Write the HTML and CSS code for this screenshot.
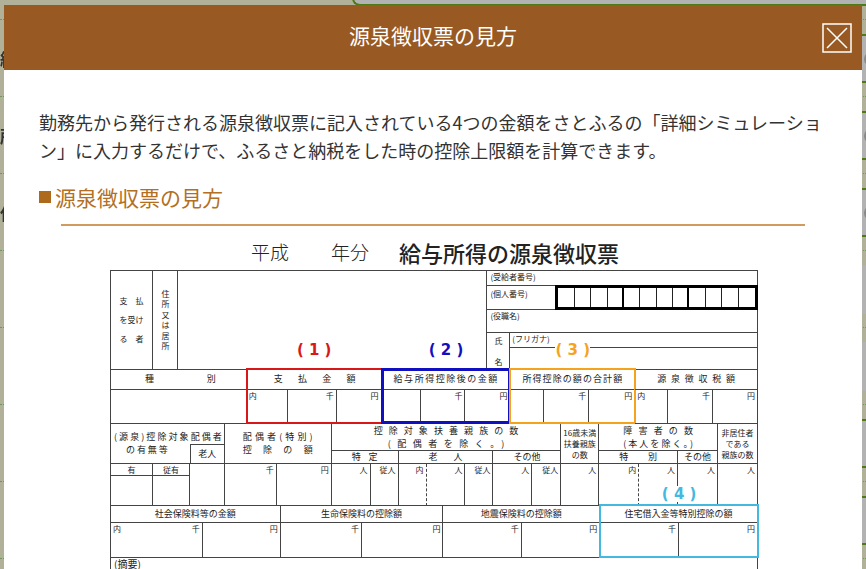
FILE: index.html
```html
<!DOCTYPE html>
<html lang="ja">
<head>
    <meta charset="UTF-8">
    <meta name="viewport" content="width=device-width, initial-scale=1.0">
    <title>源泉徴収票の見方</title>
    <link rel="stylesheet" href="styles.css">
</head>
<body>
    <!-- Page behind the dialog -->
    <div class="page" aria-hidden="true">
        <div class="page-row"><div class="page-field"></div></div>
        <div class="page-row"><span>給</span><div class="page-field select"></div></div>
        <div class="page-row"><span>所</span><div class="page-field select"></div></div>
        <div class="page-row"><span>住</span><div class="page-field select"></div></div>
        <div class="page-row"><div class="page-field plain"></div></div>
        <div class="page-row"><div class="page-field plain"></div></div>
        <div class="page-row"><div class="page-field"></div></div>
        <div class="page-row"><div class="page-field"></div></div>
    </div>

    <div class="overlay">
        <div class="modal" role="dialog" aria-labelledby="modalTitle">
            <header class="modal-header">
                <h1 id="modalTitle">源泉徴収票の見方</h1>
                <button type="button" class="close" aria-label="閉じる">
                    <svg width="30" height="30" viewBox="0 0 30 30" fill="none" stroke="#fff">
                        <rect x="1" y="1" width="28" height="28" stroke-width="1.5"/>
                        <path d="M5 5L25 25M25 5L5 25" stroke-width="1.5"/>
                    </svg>
                </button>
            </header>

            <div class="modal-body">
                <p class="lead">勤務先から発行される源泉徴収票に記入されている4つの金額をさとふるの「詳細シミュレーション」に入力するだけで、ふるさと納税をした時の控除上限額を計算できます。</p>
                <h2>源泉徴収票の見方</h2>

                <div class="slip">
                    <div class="slip-title">
                        <span>平成</span>
                        <span>年分</span>
                        <strong>給与所得の源泉徴収票</strong>
                    </div>

                    <div class="sheet">
                        <!-- Payee -->
                        <div class="grid payee">
                            <div class="cell payee-label"><span>支　払</span><span>を受け</span><span>る　者</span></div>
                            <div class="cell address spread">住所又は居所</div>
                            <div class="cell"></div>
                            <div class="person">
                                <div class="cell">(受給者番号)</div>
                                <div class="cell my-number">
                                    <span>(個人番号)</span>
                                    <div class="digits">
                                        <i></i><i></i><i></i><i></i><i></i><i></i><i></i><i></i><i></i><i></i><i></i><i></i>
                                    </div>
                                </div>
                                <div class="cell">(役職名)</div>
                                <div class="name">
                                    <div class="cell name-label"><span>氏</span><span>名</span></div>
                                    <div>
                                        <div class="cell kana">(フリガナ)</div>
                                        <div class="cell"></div>
                                    </div>
                                </div>
                            </div>
                        </div>

                        <!-- Amounts -->
                        <div class="grid amounts">
                            <div class="group">
                                <div class="cell label spread wide">種別</div>
                                <div class="cell"></div>
                            </div>
                            <div class="group mark red">
                                <b class="tag">( 1 )</b>
                                <div class="cell label spread pay">支払金額</div>
                                <div class="grid split-pay">
                                    <div class="cell unit left">内</div>
                                    <div class="cell unit">千</div>
                                    <div class="cell unit">円</div>
                                </div>
                            </div>
                            <div class="group mark blue">
                                <b class="tag">( 2 )</b>
                                <div class="cell label spread">給与所得控除後の金額</div>
                                <div class="grid split-after">
                                    <div class="cell"></div>
                                    <div class="cell unit">千</div>
                                    <div class="cell unit">円</div>
                                </div>
                            </div>
                            <div class="group mark orange">
                                <b class="tag">( 3 )</b>
                                <div class="cell label spread">所得控除の額の合計額</div>
                                <div class="grid split-total">
                                    <div class="cell"></div>
                                    <div class="cell unit">千</div>
                                    <div class="cell unit">円</div>
                                </div>
                            </div>
                            <div class="group">
                                <div class="cell label spread tax">源泉徴収税額</div>
                                <div class="grid split-tax">
                                    <div class="cell unit left">内</div>
                                    <div class="cell unit">千</div>
                                    <div class="cell unit">円</div>
                                </div>
                            </div>
                        </div>

                        <!-- Dependants -->
                        <div class="grid family">
                            <div class="spouse">
                                <div class="cell spouse-label"><span class="spread">(源泉)控除対象配偶者</span><span class="spread second">の有無等</span></div>
                                <div class="cell old">老人</div>
                            </div>
                            <div class="cell special"><span class="spread">配偶者(特別)</span><span class="spread">控除の額</span></div>
                            <div class="group">
                                <div class="cell count wide"><span class="spread">控除対象扶養親族の数</span><span class="spread">(配偶者を除く。)</span></div>
                                <div class="grid split-count">
                                    <div class="cell label spread">特定</div>
                                    <div class="cell label spread">老人</div>
                                    <div class="cell label spread">その他</div>
                                </div>
                            </div>
                            <div class="cell note"><span>16歳未満</span><span>扶養親族</span><span>の数</span></div>
                            <div class="group">
                                <div class="cell count"><span class="spread">障害者の数</span><span class="spread">(本人を除く。)</span></div>
                                <div class="grid split-care">
                                    <div class="cell label spread">特別</div>
                                    <div class="cell label">その他</div>
                                </div>
                            </div>
                            <div class="cell note"><span>非居住者</span><span>である</span><span>親族の数</span></div>
                        </div>

                        <div class="grid people">
                            <div class="group yes"><div class="cell label">有</div><div class="cell"></div></div>
                            <div class="group yes"><div class="cell label">従有</div><div class="cell"></div></div>
                            <div class="cell"></div>
                            <div class="cell unit">千</div>
                            <div class="cell unit">円</div>
                            <div class="cell unit">人</div>
                            <div class="cell unit">従人</div>
                            <div class="cell unit dashed">内</div>
                            <div class="cell unit">人</div>
                            <div class="cell unit">従人</div>
                            <div class="cell unit">人</div>
                            <div class="cell unit">従人</div>
                            <div class="cell unit">人</div>
                            <div class="cell unit dashed">内</div>
                            <div class="cell unit">人</div>
                            <div class="cell unit">人</div>
                            <div class="cell unit">人</div>
                        </div>

                        <!-- Insurance and housing loan -->
                        <div class="grid insurance">
                            <div class="group">
                                <div class="cell label">社会保険料等の金額</div>
                                <div class="grid split-social">
                                    <div class="cell unit both"><span>内</span><span>千</span></div>
                                    <div class="cell unit">円</div>
                                </div>
                            </div>
                            <div class="group">
                                <div class="cell label">生命保険料の控除額</div>
                                <div class="grid halves">
                                    <div class="cell unit">千</div>
                                    <div class="cell unit">円</div>
                                </div>
                            </div>
                            <div class="group">
                                <div class="cell label">地震保険料の控除額</div>
                                <div class="grid halves">
                                    <div class="cell unit">千</div>
                                    <div class="cell unit">円</div>
                                </div>
                            </div>
                            <div class="group mark cyan">
                                <b class="tag">( 4 )</b>
                                <div class="cell label">住宅借入金等特別控除の額</div>
                                <div class="grid halves">
                                    <div class="cell unit">千</div>
                                    <div class="cell unit">円</div>
                                </div>
                            </div>
                        </div>

                        <div class="cell remarks">(摘要)</div>
                    </div>
                </div>
            </div>
        </div>
    </div>
</body>
</html>
```

FILE: styles.css
```css
* {
    box-sizing: border-box;
}

body {
    margin: 0;
    background-color: #b1b199;
    color: #333;
    font-family: "Noto Sans CJK JP", sans-serif;
}

h1,
h2,
p {
    margin: 0;
    font-weight: normal;
}

/* Page behind the dialog */
.page {
    position: fixed;
    inset: 0;
    overflow: hidden;
}

.page-row {
    display: grid;
    grid-template-columns: 352px 1fr;
    align-items: center;
    height: 77px;
    padding: 14px 0;
    border-bottom: 1px dotted #6d9a55;
    font-size: 17px;
    font-weight: bold;
}

.page-row:first-child {
    margin-top: -57px;
}

.page-field {
    grid-column: 2;
    height: 49px;
    border: 2px solid #4d7a16;
    border-right: none;
    border-radius: 8px 0 0 8px;
    background-color: #b2b2b2;
}

.page-field.plain {
    border-color: #b2b2b2;
}

.page-field.select::after {
    content: "";
    display: block;
    width: 14px;
    height: 14px;
    margin: 16px -12px 0 auto;
    border-radius: 50%;
    background-color: #888;
}

/* Dialog */
.overlay {
    position: fixed;
    inset: 0;
    padding: 5px 4px 0;
    overflow: hidden;
}

.modal {
    background-color: #fff;
}

.modal-header {
    display: grid;
    grid-template-columns: 1fr auto 1fr;
    align-items: center;
    height: 65px;
    padding: 0 10px;
    background-color: #995923;
    color: #fff;
}

.modal-header h1 {
    grid-column: 2;
    padding-bottom: 6px;
    font-size: 21px;
    line-height: 30px;
}

.close {
    justify-self: end;
    width: 30px;
    height: 30px;
    padding: 0;
    border: none;
    background: none;
    cursor: pointer;
}

.close svg {
    display: block;
}

.modal-body {
    padding: 38px 35px 0;
}

.lead {
    font-size: 18px;
    line-height: 28px;
}

h2 {
    display: flex;
    align-items: center;
    gap: 4px;
    margin-top: 17px;
    color: #b36f22;
    font-size: 21px;
    line-height: 32px;
}

h2::before {
    content: "";
    width: 12px;
    height: 12px;
    background-color: #ad6a1c;
}

/* Tax slip */
.slip {
    margin: 11px 22px 0;
    border-top: 2px solid #d19a5f;
    color: #222;
    font-size: 9px;
    line-height: 12px;
}

.slip-title {
    display: flex;
    gap: 42px;
    margin-left: 190px;
    padding: 10px 0 2px;
    font-size: 19px;
    font-weight: 300;
    line-height: 32px;
    white-space: nowrap;
}

.slip-title strong {
    margin-left: -12px;
    font-size: 22px;
    font-weight: 500;
}

.sheet {
    margin: 0 47px 0 49px;
    border: solid #444;
    border-width: 1px 0 0 1px;
}

.grid {
    display: grid;
}

.grid > *,
.name > * {
    min-width: 0;
}

.cell {
    border: solid #444;
    border-width: 0 1px 1px 0;
    white-space: nowrap;
}

.group {
    position: relative;
    display: grid;
    grid-template-rows: auto 1fr;
}

.label {
    text-align: center;
}

.spread {
    text-align: justify;
    text-align-last: justify;
}

.unit {
    padding-right: 2px;
    font-size: 8px;
    line-height: 12px;
    text-align: right;
}

.unit.left {
    padding-left: 2px;
    text-align: left;
}

.unit.both {
    display: flex;
    justify-content: space-between;
    padding-left: 2px;
}

.unit.dashed {
    border-right-style: dashed;
}

/* Payee */
.payee {
    grid-template-columns: 42fr 25fr 310fr 271fr;
    height: 99px;
}

.payee-label {
    display: flex;
    flex-direction: column;
    align-items: center;
    justify-content: center;
    gap: 7px;
    font-size: 8px;
}

.address {
    padding: 19px 0;
    writing-mode: vertical-rl;
    font-size: 8px;
    line-height: 24px;
}

.person {
    display: grid;
    grid-template-rows: 15fr 24fr 23fr 37fr;
    font-size: 8px;
    line-height: 11px;
}

.person > .cell {
    padding-left: 3px;
}

.my-number {
    display: flex;
    justify-content: space-between;
}

.my-number span {
    padding-top: 2px;
}

.digits {
    display: grid;
    grid-template-columns: repeat(12, 1fr);
    width: 76%;
    border: 3px solid #000;
    margin: -1px -1px -1px 0;
}

.digits i {
    border-right: 1px solid #222;
}

.digits i:nth-child(4n) {
    border-right: 2px solid #000;
}

.digits i:last-child {
    border-right: none;
}

.name {
    display: grid;
    grid-template-columns: 23fr 248fr;
}

.name > div:last-child {
    display: grid;
    grid-template-rows: 15fr 22fr;
}

.name-label {
    display: flex;
    flex-direction: column;
    align-items: center;
    justify-content: space-between;
    padding: 2px 0;
}

.kana {
    padding-left: 2px;
}

/* Amounts */
.amounts {
    grid-template-columns: 136fr 135fr 129fr 125fr 123fr;
    height: 54px;
}

.amounts .label {
    padding: 3px 12px 4px;
}

.amounts .wide {
    padding-left: 34px;
    padding-right: 30px;
}

.amounts .pay {
    padding-left: 27px;
    padding-right: 25px;
}

.amounts .tax {
    padding-left: 22px;
    padding-right: 22px;
}

.split-pay {
    grid-template-columns: 41fr 49fr 45fr;
}

.split-after {
    grid-template-columns: 39fr 45fr 45fr;
}

.split-total {
    grid-template-columns: 34fr 45fr 46fr;
}

.split-tax {
    grid-template-columns: 33fr 45fr 45fr;
}

/* Highlighted amounts */
.mark::after {
    content: "";
    position: absolute;
    inset: -2px -1px 0 -1px;
    border: 2px solid;
}

.tag {
    position: absolute;
    top: -28px;
    left: 0;
    right: 0;
    width: fit-content;
    margin: 0 auto;
    background-color: #fff;
    font-family: "DejaVu Sans", sans-serif;
    font-size: 15px;
    line-height: 16px;
}

.red {
    color: #d81818;
}

.blue {
    color: #1010c0;
}

.blue::after {
    border-width: 3px;
}

.orange {
    color: #f5a31d;
}

.cyan {
    color: #45b8e0;
}

.cyan .tag {
    top: -20px;
}

.mark .cell {
    color: #222;
}

/* Dependants */
.family {
    grid-template-columns: 114fr 107fr 230fr 38fr 119fr 40fr;
    height: 40px;
    line-height: 13px;
}

.spouse {
    display: grid;
    grid-template-columns: 79fr 35fr;
    grid-template-rows: 20px 20px;
}

.spouse-label {
    grid-area: 1 / 1 / 3 / 3;
    display: flex;
    flex-direction: column;
    padding: 6px 2px 0 3px;
}

.spouse-label .second {
    padding: 0 54px 0 12px;
}

.old {
    grid-area: 2 / 2;
    border-top-width: 1px;
    border-left-width: 1px;
    padding-top: 2px;
    text-align: center;
}

.special {
    display: flex;
    flex-direction: column;
    padding: 6px 18px 0;
}

.count {
    display: flex;
    flex-direction: column;
    height: 27px;
    padding: 0 24px;
}

.count.wide {
    padding: 0 42px;
}

.count.wide span:last-child {
    padding: 0 14px;
}

.family .label {
    line-height: 12px;
}

.family .label.spread {
    padding: 0 20px;
}

.split-count {
    grid-template-columns: 67fr 95fr 68fr;
}

.split-count .label.spread:nth-child(2) {
    padding: 0 30px;
}

.split-care {
    grid-template-columns: 79fr 40fr;
}

.note {
    display: flex;
    flex-direction: column;
    align-items: center;
    justify-content: center;
    font-size: 8px;
    line-height: 11px;
}

.people {
    grid-template-columns: 42fr 37fr 35fr 52fr 55fr 39fr 28fr 28fr 39fr 28fr 39fr 29fr 38fr 40fr 39fr 40fr 40fr;
    height: 42px;
}

.yes .label {
    font-size: 8px;
    line-height: 11px;
}

/* Insurance and housing loan */
.insurance {
    grid-template-columns: 170fr 163fr 157fr 158fr;
    height: 52px;
}

.insurance .label {
    padding: 2px 0;
}

.split-social {
    grid-template-columns: 92fr 78fr;
}

.halves {
    grid-template-columns: 1fr 1fr;
}

.remarks {
    height: 90px;
    padding-left: 3px;
    font-size: 10px;
    line-height: 11px;
}
```
